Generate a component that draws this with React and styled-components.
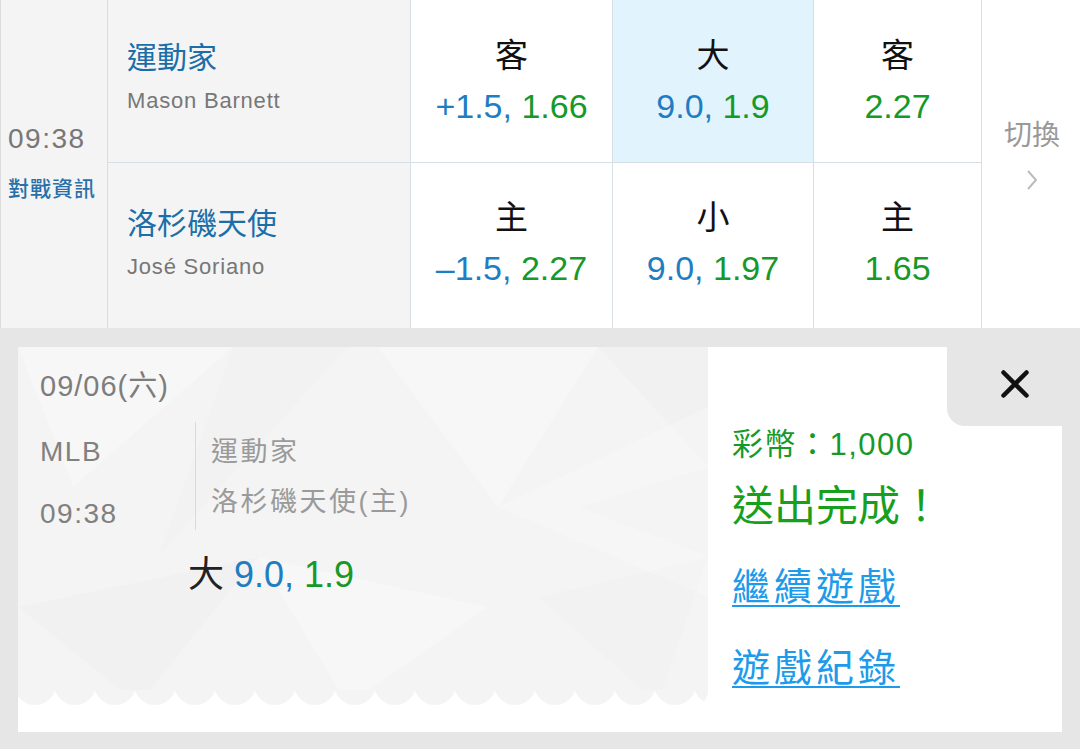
import React from "react";
import styled, { createGlobalStyle } from "styled-components";

const GlobalStyle = createGlobalStyle`
  html, body {
    margin: 0;
    padding: 0;
    background: #e6e6e6;
  }
  body {
    font-family: "Liberation Sans", "Noto Sans CJK TC", sans-serif;
  }
  * { box-sizing: border-box; }
`;

const BLUE = "#1f7dc2";
const GREEN = "#17992a";
const LINE = "#d6dee6";

const Page = styled.div`
  width: 1080px;
  height: 749px;
  background: #e6e6e6;
  overflow: hidden;
  display: flex;
  flex-direction: column;
`;

/* ---------- match board ---------- */

const Board = styled.div`
  display: grid;
  grid-template-columns: 108px 303px 202px 201px 168px 98px;
  grid-template-rows: 163px 165px;
  background: #fff;
`;

const TimeCell = styled.div`
  grid-row: 1 / span 2;
  background: #f4f4f4;
  border-left: 1px solid #dcdcdc;
  border-right: 1px solid ${LINE};
  padding: 0 0 4px 7px;
  display: flex;
  flex-direction: column;
  justify-content: center;
  gap: 19px;
`;

const Clock = styled.div`
  font-size: 28px;
  line-height: 34px;
  letter-spacing: 1.5px;
  color: #777;
`;

const InfoLink = styled.div`
  font-size: 21px;
  line-height: 28px;
  letter-spacing: 1px;
  font-weight: 500;
  color: #2a70a8;
`;

const TeamCell = styled.div`
  background: #f4f4f4;
  border-right: 1px solid ${LINE};
  border-bottom: ${(p) => (p.$top ? `1px solid ${LINE}` : "none")};
  padding: 0 0 ${(p) => (p.$top ? "8px" : "4px")} 19px;
  display: flex;
  flex-direction: column;
  justify-content: center;
  gap: 11px;
`;

const TeamName = styled.div`
  font-size: 30px;
  line-height: 36px;
  color: #1b6ea8;
`;

const Pitcher = styled.div`
  font-size: 22px;
  line-height: 28px;
  letter-spacing: 0.8px;
  color: #777;
`;

const OddsCell = styled.div`
  background: ${(p) => (p.$active ? "#e1f3fd" : "#fff")};
  border-right: 1px solid ${LINE};
  border-bottom: ${(p) => (p.$top ? `1px solid ${LINE}` : "none")};
  padding-bottom: ${(p) => (p.$top ? "0" : "4px")};
  display: flex;
  flex-direction: column;
  align-items: center;
  justify-content: center;
  gap: 11px;
`;

const OddsLabel = styled.div`
  font-size: 33px;
  line-height: 38px;
  color: #111;
`;

const OddsValue = styled.div`
  font-size: 34px;
  line-height: 40px;
  white-space: nowrap;
`;

const Num = styled.span`
  color: ${(p) => (p.$green ? GREEN : BLUE)};
`;

const SwitchCell = styled.div`
  grid-column: 6;
  grid-row: 1 / span 2;
  background: #fff;
  display: flex;
  flex-direction: column;
  align-items: center;
  justify-content: center;
  gap: 16px;
  padding: 0 0 18px 2px;
`;

const SwitchText = styled.div`
  font-size: 28px;
  line-height: 34px;
  color: #999;
`;

/* ---------- bet slip ---------- */

const Card = styled.div`
  position: relative;
  margin: 19px 18px 0;
  height: 385px;
  background: #fff;
  display: flex;
`;

const Ticket = styled.div`
  position: relative;
  width: 690px;
  height: 358px;
  background: #f4f4f4;
  border-bottom-right-radius: 14px;
  overflow: hidden;
  padding: 22px 0 0 22px;

  &::after {
    content: "";
    position: absolute;
    left: 0;
    right: 0;
    bottom: 0;
    height: 15px;
    background-color: #fff;
    background-image: radial-gradient(
      circle at 20px -6px,
      #f4f4f4 20.5px,
      transparent 21.5px
    );
    background-size: 40px 15px;
    background-position: -3px 0;
    background-repeat: repeat-x;
  }
`;

const Pattern = styled.svg`
  position: absolute;
  inset: 0;
  width: 100%;
  height: 100%;
`;

const TicketBody = styled.div`
  position: relative;
`;

const DateLine = styled.div`
  font-size: 29px;
  line-height: 34px;
  letter-spacing: 1px;
  color: #7d7d7d;
`;

const InfoRow = styled.div`
  display: flex;
  margin-top: 19px;
  height: 108px;
`;

const MetaCol = styled.div`
  width: 155px;
  display: flex;
  flex-direction: column;
  padding-top: 12px;
  gap: 26px;
  font-size: 28px;
  line-height: 36px;
  letter-spacing: 1.5px;
  color: #808080;
`;

const TeamsCol = styled.div`
  border-left: 1px solid #dadada;
  padding: 12px 0 0 15px;
  display: flex;
  flex-direction: column;
  gap: 14px;
  font-size: 27px;
  line-height: 36px;
  letter-spacing: 2.5px;
  color: #9a9a9a;
`;

const Pick = styled.div`
  margin: 23px 0 0 148px;
  font-size: 36px;
  line-height: 44px;
  color: #222;
  white-space: nowrap;
`;

const Result = styled.div`
  flex: 1;
  padding: 79px 0 0 24px;
  display: flex;
  flex-direction: column;
  align-items: flex-start;
`;

const Coins = styled.div`
  font-size: 31px;
  line-height: 38px;
  letter-spacing: 1.5px;
  color: ${GREEN};
`;

const Done = styled.div`
  margin-top: 18px;
  font-size: 42px;
  line-height: 50px;
  color: #18a01c;
`;

const ActionLink = styled.a`
  margin-top: ${(p) => p.$gap}px;
  font-size: 38px;
  line-height: 46px;
  letter-spacing: 4px;
  color: #1d9bea;
  text-decoration: underline;
  text-decoration-thickness: 2px;
  text-underline-offset: 5px;
  cursor: pointer;
`;

const CloseTab = styled.button`
  position: absolute;
  top: 0;
  right: 0;
  width: 115px;
  height: 79px;
  border: none;
  background: #e6e6e6;
  border-bottom-left-radius: 18px;
  display: flex;
  align-items: center;
  justify-content: center;
  padding: 0 0 6px 20px;
  cursor: pointer;
`;

const rows = [
  {
    team: "運動家",
    pitcher: "Mason Barnett",
    cells: [
      { label: "客", line: "+1.5", odds: "1.66" },
      { label: "大", line: "9.0", odds: "1.9", active: true },
      { label: "客", odds: "2.27" },
    ],
  },
  {
    team: "洛杉磯天使",
    pitcher: "José Soriano",
    cells: [
      { label: "主", line: "–1.5", odds: "2.27" },
      { label: "小", line: "9.0", odds: "1.97" },
      { label: "主", odds: "1.65" },
    ],
  },
];

const Chevron = () => (
  <svg width="14" height="22" viewBox="0 0 14 22">
    <path d="M3 2 L11 11 L3 20" fill="none" stroke="#bbb" strokeWidth="2" />
  </svg>
);

const CloseIcon = () => (
  <svg width="30" height="30" viewBox="0 0 30 30">
    <path
      d="M3.5 3.5 L26.5 26.5 M26.5 3.5 L3.5 26.5"
      stroke="#111"
      strokeWidth="4.5"
      strokeLinecap="round"
    />
  </svg>
);

// faint low-poly backdrop of the ticket
const TicketPattern = () => (
  <Pattern viewBox="0 0 690 358" preserveAspectRatio="none">
    <polygon points="0,0 215,0 55,140" fill="#fff" opacity="0.25" />
    <polygon points="215,0 330,0 140,210" fill="#000" opacity="0.008" />
    <polygon points="360,0 580,0 480,160" fill="#fff" opacity="0.3" />
    <polygon points="580,0 690,0 690,120" fill="#000" opacity="0.01" />
    <polygon points="480,160 690,60 690,250" fill="#fff" opacity="0.22" />
    <polygon points="0,260 240,210 120,358" fill="#000" opacity="0.01" />
    <polygon points="240,210 470,260 330,358" fill="#fff" opacity="0.25" />
    <polygon points="520,250 690,210 640,358" fill="#000" opacity="0.008" />
    <polygon points="560,160 690,120 690,210" fill="#000" opacity="0.008" />
  </Pattern>
);

export default function App() {
  return (
    <Page>
      <GlobalStyle />
      <Board>
        <TimeCell>
          <Clock>09:38</Clock>
          <InfoLink>對戰資訊</InfoLink>
        </TimeCell>
        {rows.map((row, i) => (
          <React.Fragment key={row.team}>
            <TeamCell $top={i === 0}>
              <TeamName>{row.team}</TeamName>
              <Pitcher>{row.pitcher}</Pitcher>
            </TeamCell>
            {row.cells.map((c, j) => (
              <OddsCell key={j} $top={i === 0} $active={c.active}>
                <OddsLabel>{c.label}</OddsLabel>
                <OddsValue>
                  {c.line && <Num>{c.line}, </Num>}
                  <Num $green>{c.odds}</Num>
                </OddsValue>
              </OddsCell>
            ))}
            {i === 0 && (
              <SwitchCell>
                <SwitchText>切換</SwitchText>
                <Chevron />
              </SwitchCell>
            )}
          </React.Fragment>
        ))}
      </Board>

      <Card>
        <Ticket>
          <TicketPattern />
          <TicketBody>
            <DateLine>09/06(六)</DateLine>
            <InfoRow>
              <MetaCol>
                <div>MLB</div>
                <div>09:38</div>
              </MetaCol>
              <TeamsCol>
                <div>運動家</div>
                <div>洛杉磯天使(主)</div>
              </TeamsCol>
            </InfoRow>
            <Pick>
              大 <Num>9.0, </Num>
              <Num $green>1.9</Num>
            </Pick>
          </TicketBody>
        </Ticket>
        <Result>
          <Coins>彩幣：1,000</Coins>
          <Done>送出完成！</Done>
          <ActionLink $gap={32}>繼續遊戲</ActionLink>
          <ActionLink $gap={35}>遊戲紀錄</ActionLink>
        </Result>
        <CloseTab aria-label="close">
          <CloseIcon />
        </CloseTab>
      </Card>
    </Page>
  );
}
